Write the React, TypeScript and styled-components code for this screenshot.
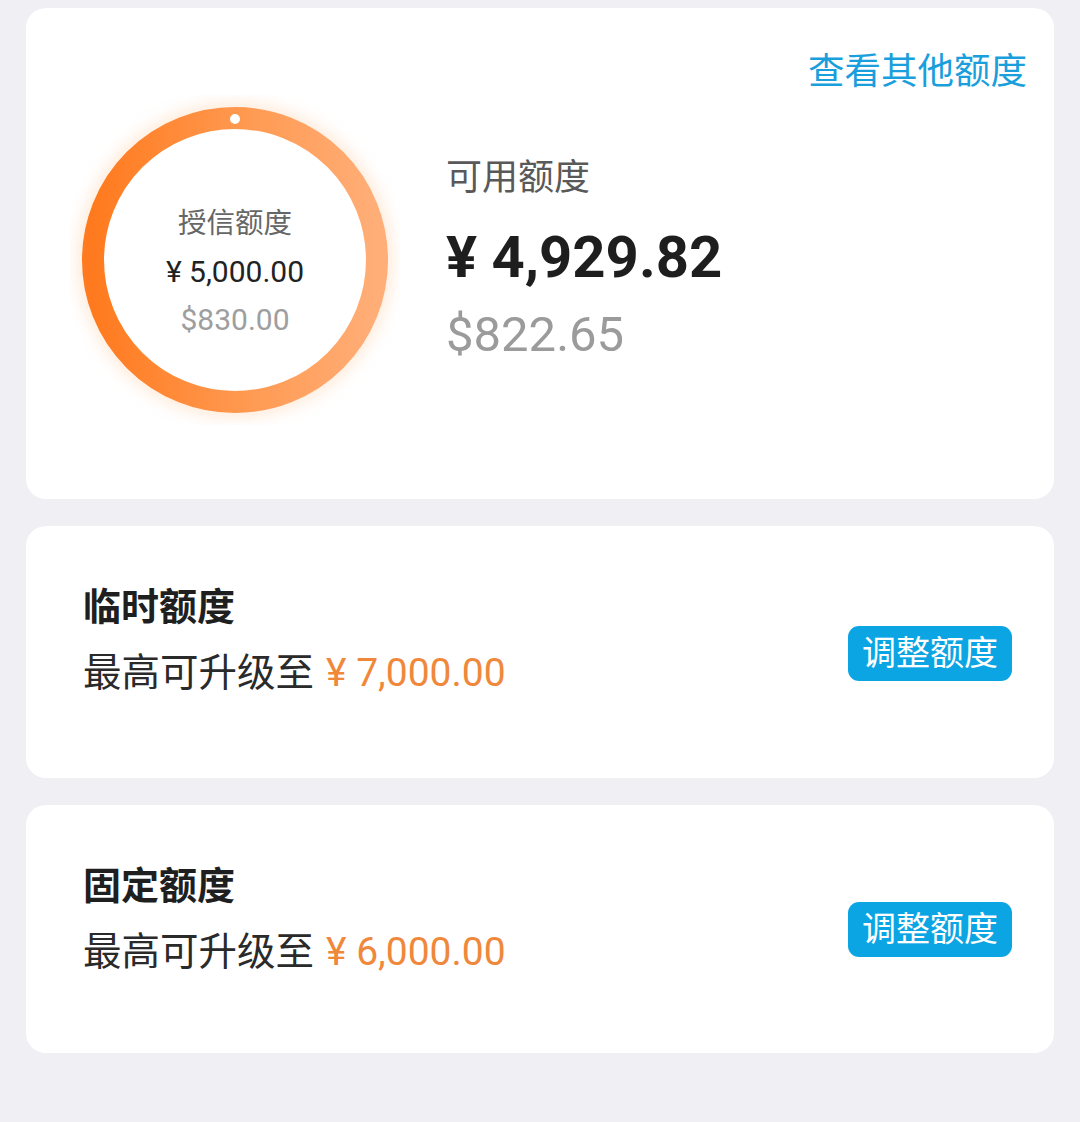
import styled, { createGlobalStyle } from 'styled-components';

/* Styles */
const GlobalStyle = createGlobalStyle`
  html, body {
    margin: 0;
    padding: 0;
    background: #efeff4;
  }

  body {
    font-family: Roboto, "Noto Sans CJK SC", sans-serif;
    -webkit-font-smoothing: antialiased;
  }
`;

const Page = styled.div`
  padding: 8px 26px 40px;
  display: flex;
  flex-direction: column;
  gap: 27px;
  min-height: 1122px;
  box-sizing: border-box;
`;

const Card = styled.div`
  background: #ffffff;
  border-radius: 20px;
`;

const SummaryCard = styled(Card)`
  padding: 38px 27px 74px 44px;
  display: flex;
  flex-direction: column;
`;

const SummaryHeader = styled.div`
  display: flex;
  justify-content: flex-end;

  a {
    font-size: 36.5px;
    line-height: 52px;
    color: #1a9fdc;
    text-decoration: none;
    cursor: pointer;
  }
`;

const SummaryBody = styled.div`
  margin-top: -3px;
  display: flex;
  align-items: flex-start;
  gap: 46px;
`;

const RingWrapper = styled.div`
  position: relative;
  width: 330px;
  height: 330px;
  flex-shrink: 0;

  svg {
    display: block;
  }
`;

const RingText = styled.div`
  position: absolute;
  top: 105px;
  left: 0;
  right: 0;
  text-align: center;
  line-height: 48px;

  .label {
    font-size: 28.5px;
    color: #666666;
  }

  .cny {
    font-size: 30px;
    color: #222222;
  }

  .usd {
    font-size: 30px;
    color: #9e9e9e;
  }
`;

const Available = styled.div`
  margin-top: 61px;
  display: flex;
  flex-direction: column;

  .label {
    font-size: 36px;
    line-height: 44px;
    color: #595959;
  }

  .cny {
    margin-top: 22px;
    font-size: 58px;
    line-height: 70px;
    font-weight: 700;
    color: #1e1e1e;
  }

  .usd {
    margin-top: 13px;
    font-size: 49px;
    line-height: 60px;
    color: #9b9b9b;
  }
`;

const LimitCard = styled(Card)<{ $bottom: number }>`
  padding: 56px 42px ${(p) => p.$bottom}px 57px;
  display: flex;
  align-items: center;
  justify-content: space-between;
`;

const LimitInfo = styled.div`
  display: flex;
  flex-direction: column;

  h2 {
    margin: 0;
    font-size: 38px;
    line-height: 50px;
    font-weight: 700;
    color: #1f1f1f;
  }

  p {
    margin: 16px 0 0;
    font-size: 38.5px;
    line-height: 50px;
    color: #2a2a2a;
  }

  p span {
    margin-left: 12px;
    font-size: 39px;
    color: #f0883b;
  }
`;

const AdjustButton = styled.button<{ $shift: number }>`
  margin-top: ${(p) => p.$shift}px;
  height: 55px;
  padding: 0 14px;
  border: none;
  border-radius: 11px;
  background: #0ca5e4;
  color: #ffffff;
  font-family: inherit;
  font-size: 34px;
  line-height: 55px;
  cursor: pointer;
`;

function CreditRing() {
  return (
    <svg width={330} height={330} viewBox="0 0 330 330">
      <defs>
        <linearGradient id="ringGrad" x1="0" y1="0" x2="1" y2="0">
          <stop offset="0%" stopColor="#ff7a1e" />
          <stop offset="55%" stopColor="#ff9a52" />
          <stop offset="100%" stopColor="#ffae78" />
        </linearGradient>
        <filter id="ringGlow" x="-20%" y="-20%" width="140%" height="140%">
          <feGaussianBlur stdDeviation="7" />
        </filter>
      </defs>
      <circle
        cx={165}
        cy={165}
        r={142}
        fill="none"
        stroke="#ffc293"
        strokeOpacity={0.3}
        strokeWidth={34}
        filter="url(#ringGlow)"
      />
      <circle cx={165} cy={165} r={131} fill="#ffffff" />
      <circle cx={165} cy={165} r={142} fill="none" stroke="url(#ringGrad)" strokeWidth={22} />
      <circle cx={165} cy={24} r={5} fill="#ffffff" />
    </svg>
  );
}

type LimitItemProps = {
  title: string;
  amount: string;
  bottom: number;
  shift: number;
};

function LimitItem({ title, amount, bottom, shift }: LimitItemProps) {
  return (
    <LimitCard $bottom={bottom}>
      <LimitInfo>
        <h2>{title}</h2>
        <p>
          最高可升级至<span>¥ {amount}</span>
        </p>
      </LimitInfo>
      <AdjustButton $shift={shift}>调整额度</AdjustButton>
    </LimitCard>
  );
}

function App() {
  return (
    <>
      <GlobalStyle />
      <Page>
        <SummaryCard>
          <SummaryHeader>
            <a>查看其他额度</a>
          </SummaryHeader>
          <SummaryBody>
            <RingWrapper>
              <CreditRing />
              <RingText>
                <div className="label">授信额度</div>
                <div className="cny">¥ 5,000.00</div>
                <div className="usd">$830.00</div>
              </RingText>
            </RingWrapper>
            <Available>
              <div className="label">可用额度</div>
              <div className="cny">¥ 4,929.82</div>
              <div className="usd">$822.65</div>
            </Available>
          </SummaryBody>
        </SummaryCard>
        <LimitItem title="临时额度" amount="7,000.00" bottom={80} shift={26} />
        <LimitItem title="固定额度" amount="6,000.00" bottom={76} shift={20} />
      </Page>
    </>
  );
}

export default App;
